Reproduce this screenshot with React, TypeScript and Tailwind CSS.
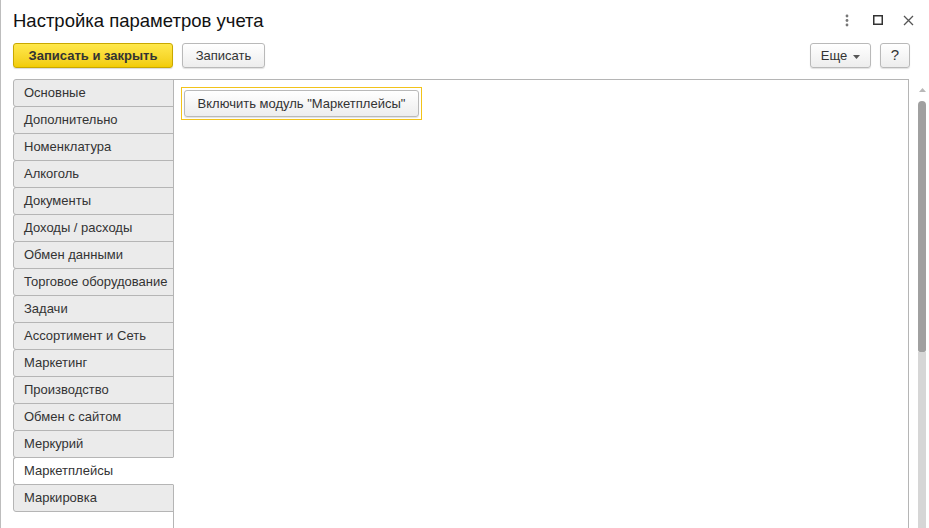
import React from 'react';

const tabs = [
  'Основные',
  'Дополнительно',
  'Номенклатура',
  'Алкоголь',
  'Документы',
  'Доходы / расходы',
  'Обмен данными',
  'Торговое оборудование',
  'Задачи',
  'Ассортимент и Сеть',
  'Маркетинг',
  'Производство',
  'Обмен с сайтом',
  'Меркурий',
  'Маркетплейсы',
  'Маркировка',
];

const ACTIVE = 'Маркетплейсы';

function WindowControls() {
  return (
    <div className="flex items-center h-[20px]">
      {/* меню */}
      <svg width="4" height="13" viewBox="0 0 4 13" className="mr-[24px]">
        <circle cx="2" cy="2" r="1.4" fill="#777" />
        <circle cx="2" cy="6.5" r="1.4" fill="#777" />
        <circle cx="2" cy="11" r="1.4" fill="#777" />
      </svg>
      {/* развернуть */}
      <svg width="10" height="10" viewBox="0 0 10 10" className="mr-[20px]">
        <rect x="0.75" y="0.75" width="8.5" height="8.5" fill="none" stroke="#333" strokeWidth="1.5" />
      </svg>
      {/* закрыть */}
      <svg width="11" height="11" viewBox="0 0 11 11">
        <path d="M1 1L10 10M10 1L1 10" stroke="#555" strokeWidth="1.3" />
      </svg>
    </div>
  );
}

function ToolButton({ children, className = '' }: { children: React.ReactNode; className?: string }) {
  return (
    <button
      className={`h-[25px] rounded-[3px] border border-[#b9b9b9] bg-gradient-to-b from-white to-[#ededed] text-[13px] text-[#333] shadow-[0_1px_1px_rgba(0,0,0,0.12)] flex items-center justify-center ${className}`}
    >
      {children}
    </button>
  );
}

export default function App() {
  return (
    <div
      className="w-[929px] h-[528px] bg-white border-l border-[#bdbdbd] overflow-hidden flex flex-col"
      style={{ fontFamily: '"Liberation Sans", Arial, sans-serif' }}
    >
      {/* Заголовок */}
      <div className="flex items-start h-[43px]">
        <h1 className="pl-[12px] pt-[9px] text-[18.5px] leading-[24px] text-[#111] flex-1">
          Настройка параметров учета
        </h1>
        <div className="pt-[10px] pr-[15px]">
          <WindowControls />
        </div>
      </div>

      {/* Командная панель */}
      <div className="flex items-center h-[25px] pl-[12px] pr-[19px]">
        <button className="h-[25px] w-[160px] rounded-[3px] border border-[#c9a800] bg-gradient-to-b from-[#ffe84a] to-[#f2cc00] text-[13px] font-bold text-[#333] shadow-[0_1px_1px_rgba(0,0,0,0.15)]">
          Записать и закрыть
        </button>
        <ToolButton className="w-[83px] ml-[9px]">Записать</ToolButton>
        <div className="flex-1" />
        <ToolButton className="w-[61px]">
          <span>Еще</span>
          <svg width="7" height="4" viewBox="0 0 7 4" className="ml-[6px] mt-[2px]">
            <path d="M0 0H7L3.5 4Z" fill="#555" />
          </svg>
        </ToolButton>
        <ToolButton className="w-[30px] ml-[9px] text-[15px]">?</ToolButton>
      </div>

      {/* Основная область */}
      <div className="flex flex-1 mt-[11px] pl-[12px] min-h-0">
        {/* Вкладки */}
        <div className="w-[161px] flex flex-col">
          {tabs.map((t) => {
            const active = t === ACTIVE;
            return (
              <div
                key={t}
                className={`h-[28px] -mb-px flex items-center pl-[10px] text-[13px] text-[#333] whitespace-nowrap border border-[#b5b5b5] rounded-l-[3px] ${
                  active ? 'bg-white border-r-white relative z-10' : 'bg-[#ebebeb]'
                }`}
              >
                {t}
              </div>
            );
          })}
          <div className="flex-1 border-r border-[#b5b5b5] mt-px" />
        </div>

        {/* Содержимое вкладки */}
        <div className="w-[736px] -ml-px border-t border-r border-l border-[#b5b5b5] pl-[7px] pt-[7px]">
          <div className="inline-flex border border-[#f2c31a] p-[2px]">
            <ToolButton className="h-[27px] w-[235px]">Включить модуль "Маркетплейсы"</ToolButton>
          </div>
        </div>

        {/* Полоса прокрутки */}
        <div className="w-[8px] ml-[9px] flex flex-col items-center">
          <svg width="7" height="4" viewBox="0 0 7 4" className="mt-[9px]">
            <path d="M3.5 0L7 4H0Z" fill="#b8b8b8" />
          </svg>
          <div className="mt-[9px] w-[8px] h-[251px] bg-[#a0a0a0] rounded-t-[4px] rounded-b-[2px]" />
          <div className="w-[8px] flex-1 bg-[#d6d6d6]" />
        </div>
      </div>
    </div>
  );
}
